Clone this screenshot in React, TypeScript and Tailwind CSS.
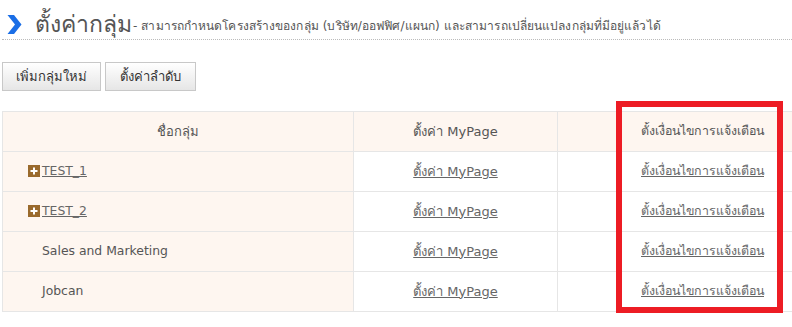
import React from "react";

const font = { fontFamily: 'Tahoma, "DejaVu Sans", "Noto Sans", sans-serif' };

function Plus() {
  return (
    <span className="inline-flex w-[12px] h-[12px] bg-[#9a6a2c] items-center justify-center mr-[2px] align-middle">
      <svg width="8" height="8" viewBox="0 0 8 8">
        <rect x="3" y="0.5" width="2" height="7" fill="#fff" />
        <rect x="0.5" y="3" width="7" height="2" fill="#fff" />
      </svg>
    </span>
  );
}

const rows = [
  { name: "TEST_1", link: true },
  { name: "TEST_2", link: true },
  { name: "Sales and Marketing", link: false },
  { name: "Jobcan", link: false },
];

export default function App() {
  return (
    <div className="relative w-[792px] h-[327px] bg-white overflow-hidden text-[#555]" style={font}>
      <div className="flex items-center pl-[7px] pt-[9px] h-[39px]">
        <svg width="15" height="19" viewBox="0 0 15 19" className="mr-[13px]">
          <path d="M0.5 0 L7 0 L14.5 9.5 L7 19 L0.5 19 L8 9.5 Z" fill="#1a6ee6" />
        </svg>
        <span className="text-[23px] leading-none text-[#555]">ตั้งค่ากลุ่ม</span>
        <span className="text-[12px] text-[#555] ml-[1px] mt-[4px] tracking-[0.1px]">- สามารถกำหนดโครงสร้างของกลุ่ม (บริษัท/ออฟฟิศ/แผนก) และสามารถเปลี่ยนแปลงกลุ่มที่มีอยู่แล้วได้</span>
      </div>
      <div className="ml-[2px] border-t border-dotted border-[#bbb]" />
      <div className="flex gap-[4px] ml-[2px] mt-[22px]">
        <button className="h-[29px] px-[13px] text-[13px] text-[#333] border border-[#c8c8c8] bg-gradient-to-b from-[#ffffff] to-[#e6e6e6]">เพิ่มกลุ่มใหม่</button>
        <button className="h-[29px] px-[14px] text-[13px] text-[#333] border border-[#c8c8c8] bg-gradient-to-b from-[#ffffff] to-[#e6e6e6]">ตั้งค่าลำดับ</button>
      </div>
      <table className="ml-[2px] mt-[20px] border-collapse w-[840px] text-[13px]">
        <thead>
          <tr className="h-[40px] bg-[#fef6f0]">
            <th className="w-[351px] border border-[#e6e6e6] font-normal">ชื่อกลุ่ม</th>
            <th className="w-[204px] border border-[#e6e6e6] font-normal">ตั้งค่า MyPage</th>
            <th className="border border-[#e6e6e6] font-normal text-left pl-[83px] text-[12.4px]">ตั้งเงื่อนไขการแจ้งเตือน</th>
          </tr>
        </thead>
        <tbody>
          {rows.map((r) => (
            <tr key={r.name} className="h-[40px]">
              <td className="bg-[#fef6f0] border border-[#e6e6e6] pl-[25px] text-[12.4px]">
                {r.link ? (
                  <span className="inline-flex items-center">
                    <Plus />
                    <a className="underline text-[#666]">{r.name}</a>
                  </span>
                ) : (
                  <span className="pl-[14px]">{r.name}</span>
                )}
              </td>
              <td className="border border-[#e6e6e6] text-center">
                <a className="underline text-[#666]">ตั้งค่า MyPage</a>
              </td>
              <td className="border border-[#e6e6e6] text-left pl-[83px] text-[12.4px]">
                <a className="underline text-[#666]">ตั้งเงื่อนไขการแจ้งเตือน</a>
              </td>
            </tr>
          ))}
        </tbody>
      </table>
      <div className="absolute left-[616px] top-[101px] w-[167px] h-[212px] border-[6px] border-[#ed1c24]" />
    </div>
  );
}
